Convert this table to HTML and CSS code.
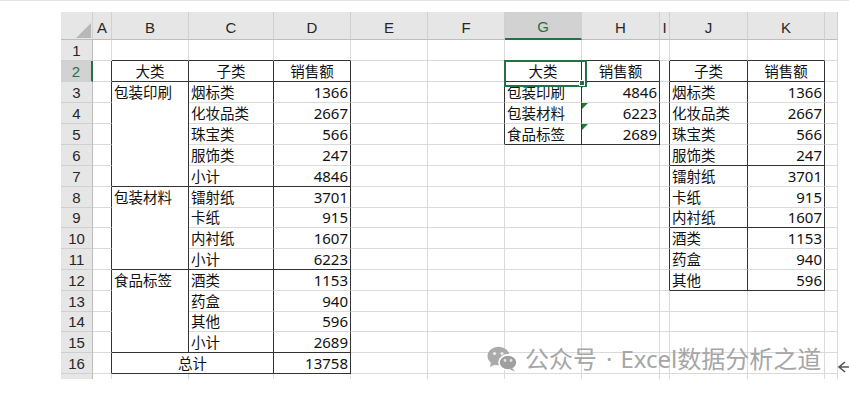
FILE: index.html
```html
<!DOCTYPE html>
<html lang="zh-CN">
<head>
<meta charset="utf-8">
<title>Sheet</title>
<link rel="stylesheet" href="styles.css">
</head>
<body>
<div class="page">
  <div class="sheet">
    <div class="hd corner"></div>
    <div class="hd">A</div><div class="hd">B</div><div class="hd">C</div><div class="hd">D</div><div class="hd">E</div><div class="hd">F</div><div class="hd hsel">G</div><div class="hd">H</div><div class="hd">I</div><div class="hd">J</div><div class="hd">K</div><div class="hd"></div>

    <div class="rh">1</div><div class="c"></div><div class="c db"></div><div class="c db"></div><div class="c db"></div><div class="c"></div><div class="c"></div><div class="c db"></div><div class="c db"></div><div class="c"></div><div class="c db"></div><div class="c db"></div><div class="c"></div>

    <div class="rh rsel">2</div><div class="c dr"></div><div class="c dr db ctr">大类</div><div class="c dr db ctr">子类</div><div class="c dr db ctr">销售额</div><div class="c"></div><div class="c dr"></div><div class="c dr db ctr active">大类<span class="handle"></span></div><div class="c dr db ctr">销售额</div><div class="c dr"></div><div class="c dr db ctr">子类</div><div class="c dr db ctr">销售额</div><div class="c"></div>

    <div class="rh">3</div><div class="c dr"></div><div class="c dr db top rs5">包装印刷</div><div class="c dr">烟标类</div><div class="c dr num">1366</div><div class="c"></div><div class="c dr"></div><div class="c dr">包装印刷</div><div class="c dr num tri">4846</div><div class="c dr"></div><div class="c dr">烟标类</div><div class="c dr num">1366</div><div class="c"></div>

    <div class="rh">4</div><div class="c dr"></div><div class="c dr">化妆品类</div><div class="c dr num">2667</div><div class="c"></div><div class="c dr"></div><div class="c dr">包装材料</div><div class="c dr num tri">6223</div><div class="c dr"></div><div class="c dr">化妆品类</div><div class="c dr num">2667</div><div class="c"></div>

    <div class="rh">5</div><div class="c dr"></div><div class="c dr">珠宝类</div><div class="c dr num">566</div><div class="c"></div><div class="c dr"></div><div class="c dr db">食品标签</div><div class="c dr db num tri">2689</div><div class="c dr"></div><div class="c dr">珠宝类</div><div class="c dr num">566</div><div class="c"></div>

    <div class="rh">6</div><div class="c dr"></div><div class="c dr">服饰类</div><div class="c dr num">247</div><div class="c"></div><div class="c"></div><div class="c"></div><div class="c"></div><div class="c dr"></div><div class="c dr db">服饰类</div><div class="c dr db num">247</div><div class="c"></div>

    <div class="rh">7</div><div class="c dr"></div><div class="c dr db">小计</div><div class="c dr db num">4846</div><div class="c"></div><div class="c"></div><div class="c"></div><div class="c"></div><div class="c dr"></div><div class="c dr">镭射纸</div><div class="c dr num">3701</div><div class="c"></div>

    <div class="rh">8</div><div class="c dr"></div><div class="c dr db top rs4">包装材料</div><div class="c dr">镭射纸</div><div class="c dr num">3701</div><div class="c"></div><div class="c"></div><div class="c"></div><div class="c"></div><div class="c dr"></div><div class="c dr">卡纸</div><div class="c dr num">915</div><div class="c"></div>

    <div class="rh">9</div><div class="c dr"></div><div class="c dr">卡纸</div><div class="c dr num">915</div><div class="c"></div><div class="c"></div><div class="c"></div><div class="c"></div><div class="c dr"></div><div class="c dr db">内衬纸</div><div class="c dr db num">1607</div><div class="c"></div>

    <div class="rh">10</div><div class="c dr"></div><div class="c dr">内衬纸</div><div class="c dr num">1607</div><div class="c"></div><div class="c"></div><div class="c"></div><div class="c"></div><div class="c dr"></div><div class="c dr">酒类</div><div class="c dr num">1153</div><div class="c"></div>

    <div class="rh">11</div><div class="c dr"></div><div class="c dr db">小计</div><div class="c dr db num">6223</div><div class="c"></div><div class="c"></div><div class="c"></div><div class="c"></div><div class="c dr"></div><div class="c dr">药盒</div><div class="c dr num">940</div><div class="c"></div>

    <div class="rh">12</div><div class="c dr"></div><div class="c dr db top rs4">食品标签</div><div class="c dr">酒类</div><div class="c dr num">1153</div><div class="c"></div><div class="c"></div><div class="c"></div><div class="c"></div><div class="c dr"></div><div class="c dr db">其他</div><div class="c dr db num">596</div><div class="c"></div>

    <div class="rh">13</div><div class="c dr"></div><div class="c dr">药盒</div><div class="c dr num">940</div><div class="c"></div><div class="c"></div><div class="c"></div><div class="c"></div><div class="c"></div><div class="c"></div><div class="c"></div><div class="c"></div>

    <div class="rh">14</div><div class="c dr"></div><div class="c dr">其他</div><div class="c dr num">596</div><div class="c"></div><div class="c"></div><div class="c"></div><div class="c"></div><div class="c"></div><div class="c"></div><div class="c"></div><div class="c"></div>

    <div class="rh">15</div><div class="c dr"></div><div class="c dr db">小计</div><div class="c dr db num">2689</div><div class="c"></div><div class="c"></div><div class="c"></div><div class="c"></div><div class="c"></div><div class="c"></div><div class="c"></div><div class="c"></div>

    <div class="rh">16</div><div class="c dr"></div><div class="c dr db ctr cs2">总计</div><div class="c dr db num">13758</div><div class="c"></div><div class="c"></div><div class="c"></div><div class="c"></div><div class="c"></div><div class="c"></div><div class="c"></div><div class="c"></div>

    <div class="rh last"></div><div class="c last"></div><div class="c last"></div><div class="c last"></div><div class="c last"></div><div class="c last"></div><div class="c last"></div><div class="c last"></div><div class="c last"></div><div class="c last"></div><div class="c last"></div><div class="c last"></div><div class="c last"></div>
  </div>

  <div class="watermark">
    <svg class="wx" width="31" height="26" viewBox="0 0 31 26">
      <ellipse cx="11.5" cy="10" rx="11" ry="9.2" fill="#ababab"/>
      <path d="M4 16 L3 21 L9 18 Z" fill="#ababab"/>
      <circle cx="7.5" cy="7.5" r="1.6" fill="#ececec"/>
      <circle cx="15" cy="7.5" r="1.6" fill="#ececec"/>
      <ellipse cx="21" cy="16.5" rx="9" ry="7.6" fill="#9f9f9f" stroke="#ffffff" stroke-width="1.6"/>
      <path d="M25 22 L28 25.5 L23 23.5 Z" fill="#9f9f9f"/>
      <circle cx="18" cy="14.5" r="1.4" fill="#e4e4e4"/>
      <circle cx="24" cy="14.5" r="1.4" fill="#e4e4e4"/>
    </svg>
    <span class="wm-text">公众号<span class="dot">·</span>Excel数据分析之道</span>
  </div>

  <svg class="back" width="12" height="16" viewBox="0 0 12 16">
    <path d="M8 3 L2 8 L8 13 M2 8 H12" fill="none" stroke="#555" stroke-width="1.6"/>
  </svg>
</div>
</body>
</html>
```

FILE: styles.css
```css
* { box-sizing: border-box; }

body {
  margin: 0;
  background: #ffffff;
}

.page {
  position: relative;
  width: 849px;
  height: 394px;
  border-top: 1px solid #e3e3e3;
  padding: 11px 0 0 61px;
  overflow: hidden;
}

.sheet {
  display: grid;
  grid-template-columns: 32px 19px 77px 85px 77px 77px 77px 77px 78px 10px 78px 77px 13px;
  grid-template-rows: 28px 21px 21px 21px 21px 21px 21px 21px 21px 20px 21px 21px 21px 21px 20px 21px 21px 5px;
  width: 777px;
  font-family: "Noto Sans CJK SC", sans-serif;
  font-size: 14.5px;
  color: #111111;
}

.hd {
  position: relative;
  background: #e6e6e6;
  border-right: 1px solid #d0d0d0;
  border-bottom: 1px solid #bdbdbd;
  display: flex;
  align-items: center;
  justify-content: center;
  padding-top: 3px;
  font-family: "Liberation Sans", sans-serif;
  font-size: 15px;
  color: #262626;
}

.hsel {
  background: #d2d2d2;
  color: #217346;
  border-bottom: 2px solid #217346;
}

.corner::after {
  content: "";
  position: absolute;
  right: 1px;
  bottom: 1px;
  border-left: 15px solid transparent;
  border-bottom: 15px solid #b8b8b8;
}

.rh {
  background: #e6e6e6;
  border-right: 1px solid #bdbdbd;
  border-bottom: 1px solid #d0d0d0;
  display: flex;
  align-items: center;
  justify-content: center;
  font-family: "Liberation Sans", sans-serif;
  font-size: 15px;
  color: #262626;
  overflow: hidden;
}

.rsel {
  background: #d2d2d2;
  color: #217346;
  border-right: 2px solid #217346;
}

.c {
  position: relative;
  border-right: 1px solid #dadada;
  border-bottom: 1px solid #dadada;
  display: flex;
  align-items: flex-end;
  line-height: 20px;
  padding: 0 2px;
  white-space: nowrap;
  min-width: 0;
}

.dr { border-right-color: #333333; }
.db { border-bottom-color: #333333; }

.ctr { justify-content: center; }
.top { align-items: flex-start; }

.num {
  justify-content: flex-end;
  font-family: "Noto Sans", "Noto Sans CJK SC", sans-serif;
  font-size: 15px;
}

.rs5 { grid-row: span 5; }
.rs4 { grid-row: span 4; }
.cs2 { grid-column: span 2; }

.last {
  border-bottom: none;
}

.active::after {
  content: "";
  position: absolute;
  left: -1px;
  top: -1px;
  width: 79px;
  height: 23px;
  border: 2px solid #217346;
  z-index: 2;
}

.handle {
  position: absolute;
  left: 74px;
  top: 19px;
  width: 6px;
  height: 6px;
  background: #217346;
  border: 1px solid #ffffff;
  z-index: 3;
}

.tri::before {
  content: "";
  position: absolute;
  left: 0;
  top: 0;
  border-top: 6px solid #1f7a35;
  border-right: 6px solid transparent;
}

.watermark {
  position: absolute;
  left: 487px;
  top: 345px;
  display: flex;
  align-items: center;
  gap: 7px;
}

.wm-text {
  font-family: "Noto Sans", "Noto Sans CJK SC", sans-serif;
  font-size: 24px;
  line-height: 26px;
  color: #a6a6a6;
  white-space: nowrap;
}

.dot {
  margin: 0 8px 0 9px;
}

.back {
  position: absolute;
  left: 837px;
  top: 358px;
}
```
